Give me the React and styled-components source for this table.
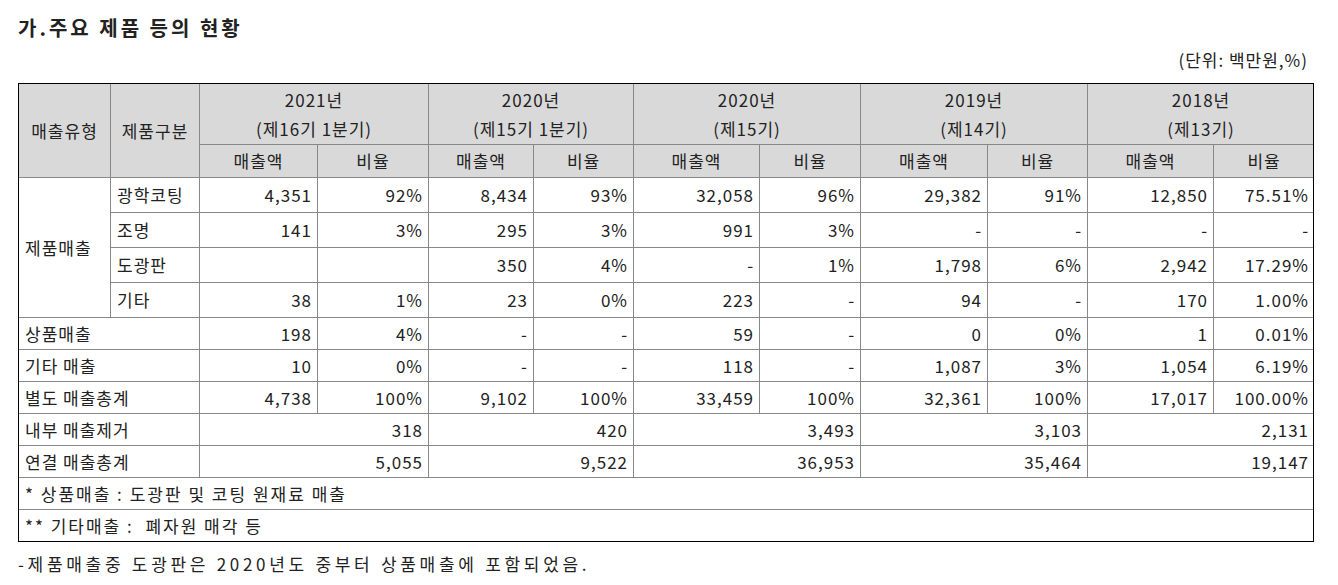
import styled, { createGlobalStyle } from 'styled-components';

const GlobalStyle = createGlobalStyle`
  body {
    margin: 0;
    background: #fff;
    color: #222;
    font-family: "Noto Sans CJK KR", "Noto Sans", sans-serif;
  }
`

const years = [
  { year: '2021년', term: '(제16기 1분기)' },
  { year: '2020년', term: '(제15기 1분기)' },
  { year: '2020년', term: '(제15기)' },
  { year: '2019년', term: '(제14기)' },
  { year: '2018년', term: '(제13기)' },
];

const widths = [92, 89, 118, 111, 105, 100, 126, 101, 127, 100, 126, 101];

const productRows = [
  { name: '광학코팅', values: ['4,351', '92%', '8,434', '93%', '32,058', '96%', '29,382', '91%', '12,850', '75.51%'] },
  { name: '조명', values: ['141', '3%', '295', '3%', '991', '3%', '-', '-', '-', '-'] },
  { name: '도광판', values: ['', '', '350', '4%', '-', '1%', '1,798', '6%', '2,942', '17.29%'] },
  { name: '기타', values: ['38', '1%', '23', '0%', '223', '-', '94', '-', '170', '1.00%'] },
];

const salesRows = [
  { name: '상품매출', values: ['198', '4%', '-', '-', '59', '-', '0', '0%', '1', '0.01%'] },
  { name: '기타 매출', values: ['10', '0%', '-', '-', '118', '-', '1,087', '3%', '1,054', '6.19%'] },
  { name: '별도 매출총계', values: ['4,738', '100%', '9,102', '100%', '33,459', '100%', '32,361', '100%', '17,017', '100.00%'] },
];

const totalRows = [
  { name: '내부 매출제거', values: ['318', '420', '3,493', '3,103', '2,131'] },
  { name: '연결 매출총계', values: ['5,055', '9,522', '36,953', '35,464', '19,147'] },
];

const notes = ['* 상품매출 : 도광판 및 코팅 원재료 매출', '** 기타매출 :  폐자원 매각 등'];

const App = () => {
  return (
    <Page>
      <GlobalStyle />
      <Title>가.주요 제품 등의 현황</Title>
      <Unit>(단위: 백만원,%)</Unit>
      <Frame>
        <Table>
          <colgroup>
            {widths.map((w, i) => <col key={i} style={{ width: w }} />)}
          </colgroup>
          <thead>
            <Row $h={61}>
              <Head rowSpan={2}>매출유형</Head>
              <Head rowSpan={2}>제품구분</Head>
              {years.map((y, i) => (
                <Head key={i} colSpan={2}>
                  <YearLine>{y.year}</YearLine>
                  <YearLine>{y.term}</YearLine>
                </Head>
              ))}
            </Row>
            <Row $h={33}>
              {years.map((y, i) => [
                <Head key={i + 'a'}>매출액</Head>,
                <Head key={i + 'b'}>비율</Head>,
              ])}
            </Row>
          </thead>
          <tbody>
            {productRows.map((r, i) => (
              <Row key={r.name} $h={35}>
                {i === 0 && <Cell rowSpan={4}>제품매출</Cell>}
                <Cell>{r.name}</Cell>
                {r.values.map((v, j) => <Cell key={j} $align="right">{v}</Cell>)}
              </Row>
            ))}
            {salesRows.map((r) => (
              <Row key={r.name} $h={32}>
                <Cell colSpan={2}>{r.name}</Cell>
                {r.values.map((v, j) => <Cell key={j} $align="right">{v}</Cell>)}
              </Row>
            ))}
            {totalRows.map((r) => (
              <Row key={r.name} $h={32}>
                <Cell colSpan={2}>{r.name}</Cell>
                {r.values.map((v, j) => <Cell key={j} colSpan={2} $align="right">{v}</Cell>)}
              </Row>
            ))}
            {notes.map((n) => (
              <Row key={n} $h={32}>
                <Cell colSpan={12} $spaced>{n}</Cell>
              </Row>
            ))}
          </tbody>
        </Table>
      </Frame>
      <Note>-제품매출중 도광판은 2020년도 중부터 상품매출에 포함되었음.</Note>
    </Page>
  )
}

const Page = styled.div`
  width: 1296px;
  padding: 16px 0 0 18px;
`

const Title = styled.h2`
  margin: 0;
  height: 24px;
  line-height: 24px;
  font-size: 20px;
  font-weight: 700;
  letter-spacing: 3px;
  color: #222;
`

const Unit = styled.div`
  margin-top: 8px;
  height: 24px;
  line-height: 24px;
  font-size: 17px;
  letter-spacing: 1px;
  text-align: right;
  padding-right: 6px;
`

const Frame = styled.div`
  margin-top: 11px;
  width: 1294px;
  border: 1px solid #000;
  overflow: hidden;
`

const Table = styled.table`
  margin: -1px;
  width: 1296px;
  table-layout: fixed;
  border-collapse: collapse;
  font-size: 17px;
  letter-spacing: 1px;
`

const Row = styled.tr`
  height: ${(p) => p.$h}px;
`

const Head = styled.th`
  background: #d9d9d9;
  border: 1px solid #888;
  font-weight: 400;
  text-align: center;
  vertical-align: middle;
  padding: 0 4px;
  line-height: 20px;
  white-space: nowrap;
`

const YearLine = styled.div`
  line-height: 29px;
`

const Cell = styled.td`
  border: 1px solid #888;
  text-align: ${(p) => p.$align || 'left'};
  padding: ${(p) => (p.$align === 'right' ? '0 5px 0 6px' : '0 6px')};
  line-height: 20px;
  letter-spacing: ${(p) => (p.$spaced ? '2px' : '1px')};
  white-space: pre;
  vertical-align: middle;
`

const Note = styled.div`
  margin-top: 10px;
  line-height: 24px;
  font-size: 17px;
  letter-spacing: 3.7px;
`

export default App;
